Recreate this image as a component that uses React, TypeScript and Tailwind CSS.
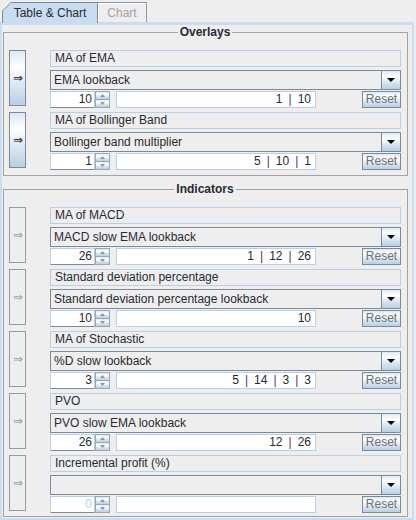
import React from "react";

interface Study {
  title: string;
  param: string;
  spin: number;
  values: number[];
  active: boolean;
  disabled?: boolean;
}

const overlays: Study[] = [
  { title: "MA of EMA", param: "EMA lookback", spin: 10, values: [1, 10], active: true },
  { title: "MA of Bollinger Band", param: "Bollinger band multiplier", spin: 1, values: [5, 10, 1], active: true },
];

const indicators: Study[] = [
  { title: "MA of MACD", param: "MACD slow EMA lookback", spin: 26, values: [1, 12, 26], active: false },
  { title: "Standard deviation percentage", param: "Standard deviation percentage lookback", spin: 10, values: [10], active: false },
  { title: "MA of Stochastic", param: "%D slow lookback", spin: 3, values: [5, 14, 3, 3], active: false },
  { title: "PVO", param: "PVO slow EMA lookback", spin: 26, values: [12, 26], active: false },
  { title: "Incremental profit (%)", param: "", spin: 0, values: [], active: false, disabled: true },
];

// metal "ocean" button gradient
const OCEAN =
  "bg-[linear-gradient(to_bottom,#dde8f3_0%,#ffffff_30%,#dde8f3_60%,#b8cfe5_100%)]";

function SpinArrow({ up }: { up?: boolean }) {
  return (
    <svg width="5" height="3" viewBox="0 0 5 3">
      <path d={up ? "M2.5 0 L5 3 L0 3 Z" : "M0 0 L5 0 L2.5 3 Z"} fill="#8a96a3" />
    </svg>
  );
}

function StudyRow({ study }: { study: Study }) {
  return (
    <div className="flex items-start gap-[24px]">
      {study.active ? (
        <button
          className={`flex h-[56px] w-[17px] items-center justify-center border border-[#7a8a99] text-[#222222] ${OCEAN}`}
        >
          ⇒
        </button>
      ) : (
        <button className="flex h-[56px] w-[17px] items-center justify-center border border-[#9a9a9a] bg-[#eeeeee] text-[#a3a3a3]">
          ⇒
        </button>
      )}

      <div className="flex w-[351px] flex-col">
        <div className="h-[17px] border border-[#b8cfe5] bg-[#eeeeee] pl-[4px] leading-[15px] text-[#2a2a33]">
          {study.title}
        </div>

        <div className="mt-[3px] flex h-[20px] border border-[#7a8a99] bg-[#eeeeee]">
          <div className="flex-1 truncate pl-[3px] leading-[18px] text-[#2a2a33]">{study.param}</div>
          <div className={`flex w-[19px] items-center justify-center border-l border-[#7a8a99] ${OCEAN}`}>
            <svg width="8" height="4" viewBox="0 0 8 4">
              <path d="M0 0 L8 0 L4 4 Z" fill="#000000" />
            </svg>
          </div>
        </div>

        <div className="mt-[1px] flex h-[17px] items-stretch">
          <div
            className={`w-[45px] border border-[#b8cfe5] border-b-[#7a8a99] bg-white pr-[2px] text-right leading-[15px] ${
              study.disabled ? "text-[#b8cfe5]" : "text-[#2a2a33]"
            }`}
          >
            {study.spin}
          </div>
          <div className="flex w-[15px] flex-col">
            <div className={`flex flex-1 items-center justify-center border border-[#9aa7b4] ${OCEAN}`}>
              <SpinArrow up />
            </div>
            <div className={`flex flex-1 items-center justify-center border border-t-0 border-[#9aa7b4] ${OCEAN}`}>
              <SpinArrow />
            </div>
          </div>
          <div className="ml-[6px] w-[200px] border border-[#b8cfe5] bg-white pr-[4px] text-right leading-[15px] text-[#2a2a33]">
            {study.values.map((v, i) => (
              <React.Fragment key={i}>
                {i > 0 && <span className="mx-[6px] text-[#5a2d6e]">|</span>}
                {v}
              </React.Fragment>
            ))}
          </div>
          <button
            className={`ml-auto w-[39px] border border-[#7a8a99] leading-[15px] text-[#707070] ${OCEAN}`}
          >
            Reset
          </button>
        </div>
      </div>
    </div>
  );
}

function Group({ title, studies, className }: { title: string; studies: Study[]; className: string }) {
  return (
    <fieldset
      className={`ml-[1px] w-[405px] border border-[#a3a3a3] pl-[5px] pr-[6px] pt-[10px] ${className}`}
    >
      <legend className="mx-auto h-[15px] px-[2px] font-bold leading-[15px] text-[#2a2a33]">{title}</legend>
      <div className="flex flex-col gap-[4px]">
        {studies.map((s) => (
          <StudyRow key={s.title} study={s} />
        ))}
      </div>
    </fieldset>
  );
}

export default function App() {
  return (
    <div className="h-[520px] w-[416px] overflow-hidden bg-[#eeeeee] font-['Liberation_Sans',Arial,sans-serif] text-[12px]">
      <div className="flex h-[22px] items-end pl-[2px]">
        <div className="relative z-10 -mb-[1px] h-[21px] w-[96px] bg-[#7a8a99] pt-[1px] pl-[1px] pr-[1px] [clip-path:polygon(0_9px,9px_0,100%_0,100%_100%,0_100%)]">
          <div className="flex h-full items-center justify-center bg-[#c8ddf2] text-[#2a2a33] [clip-path:polygon(0_8px,8px_0,100%_0,100%_100%,0_100%)]">
            Table &amp; Chart
          </div>
        </div>
        <div className="flex h-[20px] w-[49px] items-center justify-center border-t border-r border-[#8a9aab] bg-[#eeeeee] text-[#a3a3a3] shadow-[inset_1px_1px_0_#ffffff]">
          Chart
        </div>
      </div>
      <div className="h-[498px] w-[414px] border-x-2 border-t-[3px] border-b-2 border-[#c8ddf2]">
        <Group title="Overlays" studies={overlays} className="pb-[5px]" />
        <Group title="Indicators" studies={indicators} className="mt-[6px] pb-[3px]" />
      </div>
    </div>
  );
}
